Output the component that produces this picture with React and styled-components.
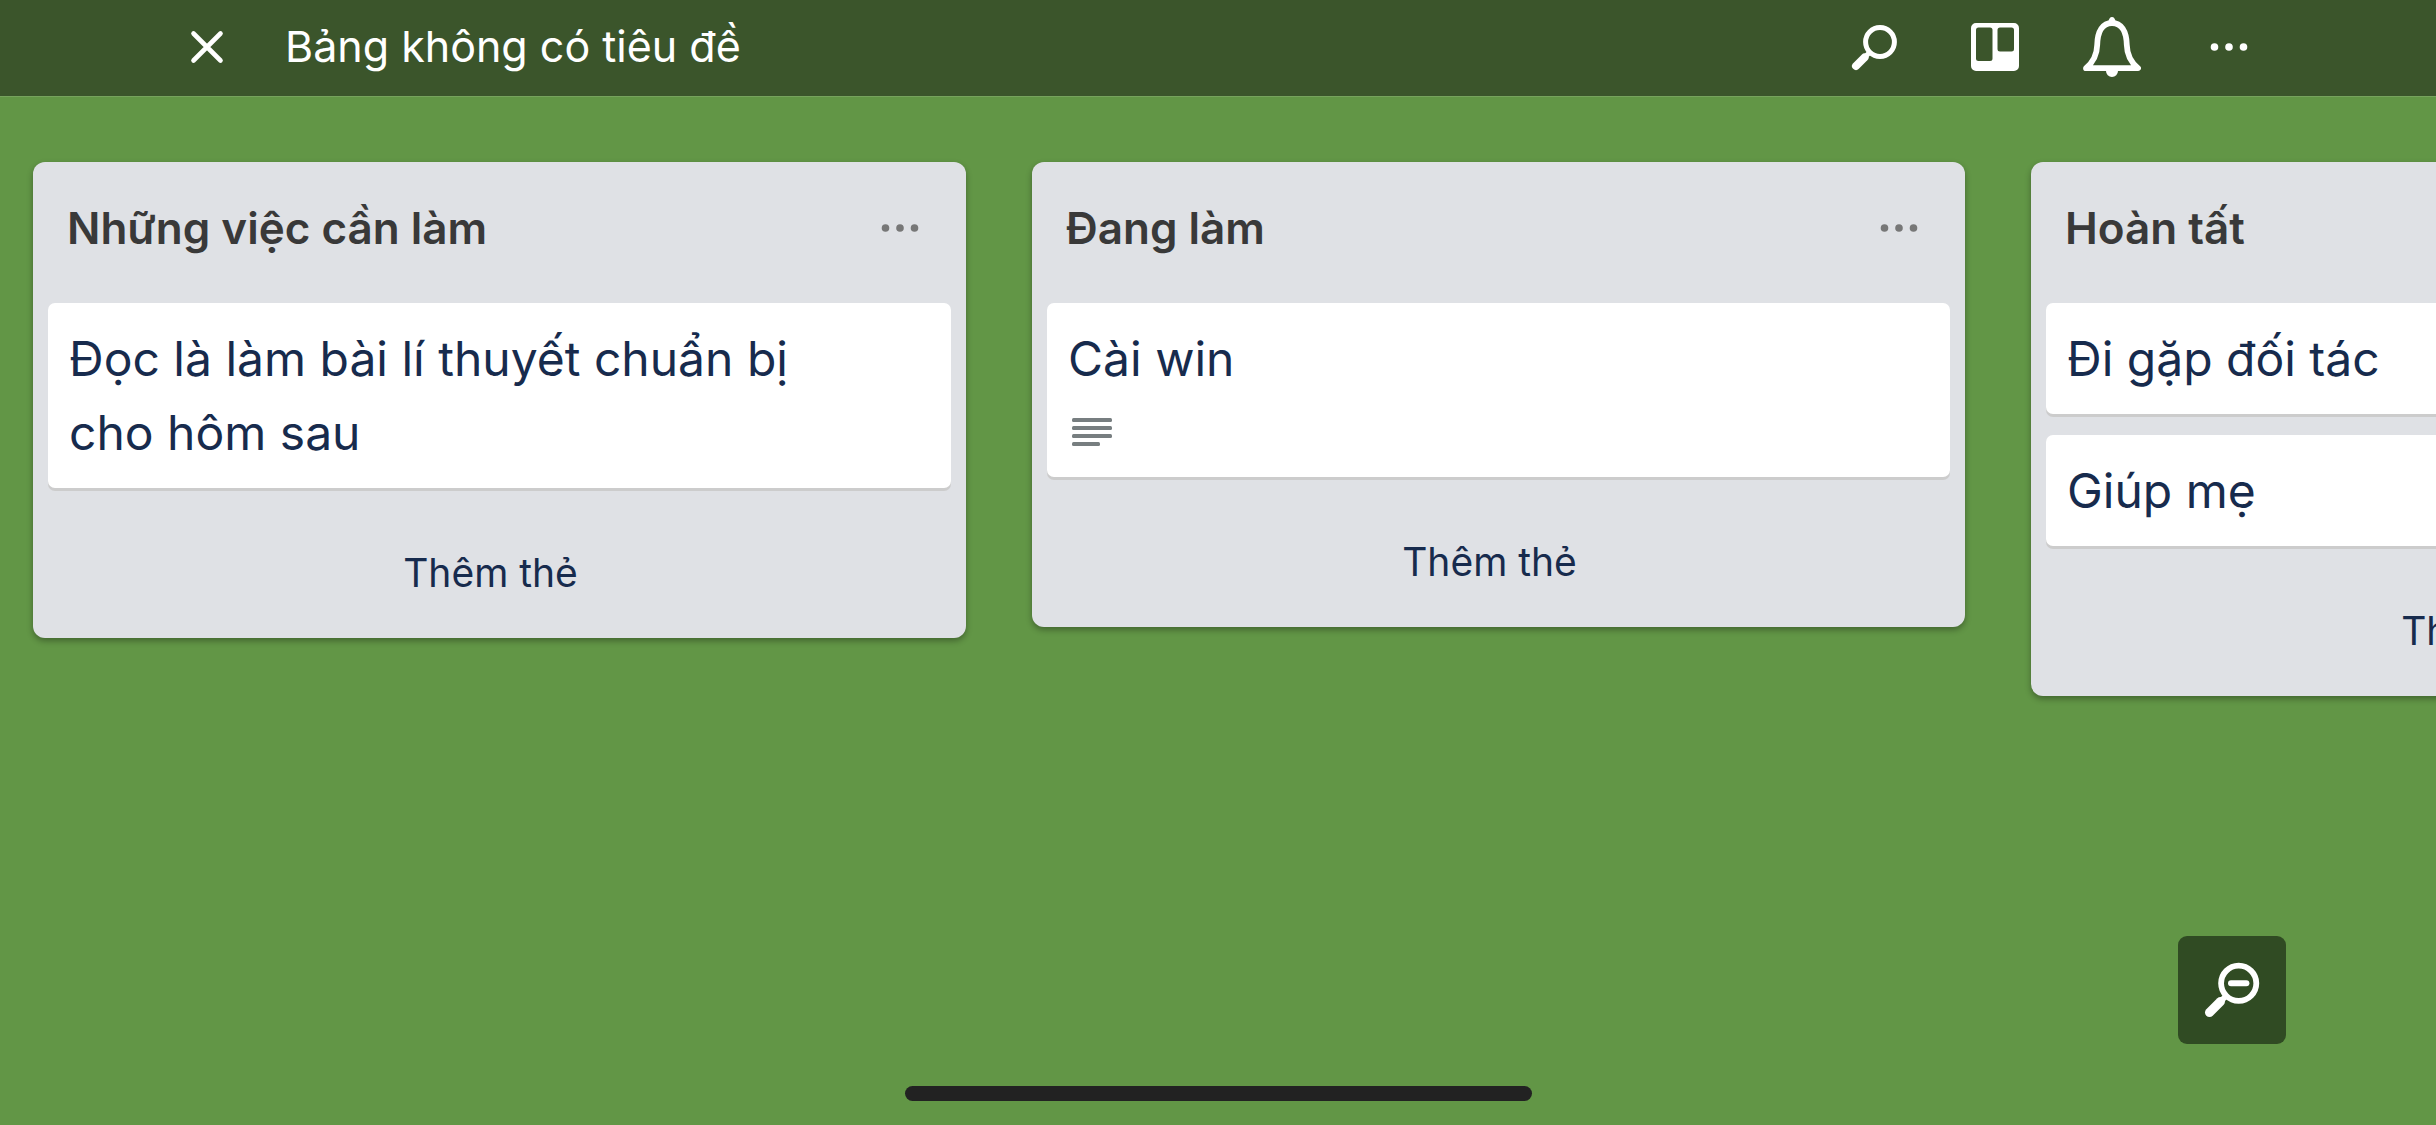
import React from "react";
import styled, { createGlobalStyle } from "styled-components";

const GlobalStyle = createGlobalStyle`
  *, *::before, *::after { box-sizing: border-box; }
  body {
    margin: 0;
    background: #629646;
    font-family: Inter, "Liberation Sans", sans-serif;
    color: #172b4d;
  }
  h1, h2, p, ul { margin: 0; padding: 0; }
  ul { list-style: none; }
  button { border: 0; padding: 0; background: none; font: inherit; color: inherit; cursor: pointer; }
`;

const Page = styled.div`
  display: flex;
  flex-direction: column;
  min-height: 100vh;
  overflow: hidden;
`;

const TopBar = styled.header`
  display: flex;
  align-items: center;
  height: 97px;
  padding: 0 149px 2px 171px;
  background: #3b552b;
  border-bottom: 1px solid #76a35d;
  color: #fff;
`;

const BoardTitle = styled.h1`
  flex: 1;
  margin-left: 42px;
  padding-bottom: 2px;
  font-size: 43px;
  line-height: 54px;
  font-weight: 400;
`;

const Actions = styled.nav`
  display: flex;
`;

const IconButton = styled.button`
  display: grid;
  place-items: center;
  width: ${(p) => p.$width}px;
  height: 72px;

  svg { display: block; }
`;

const Lists = styled.main`
  display: flex;
  flex: 1;
  align-items: flex-start;
  gap: 66px;
  padding: 65px 33px 33px;
  overflow-x: auto;
  scrollbar-width: none;
`;

const ListPanel = styled.section`
  flex: 0 0 933px;
  padding: 0 15px;
  border-radius: 12px;
  background: #dfe1e5;
  box-shadow: 0 3px 6px rgba(0, 0, 0, 0.32);
`;

const ListHeader = styled.header`
  display: flex;
  align-items: center;
  justify-content: space-between;
  height: 132px;
  margin-bottom: 9px;
  padding: 0 15px 0 19px;
  color: #777;
`;

const ListTitle = styled.h2`
  font-size: 44px;
  line-height: 54px;
  font-weight: 600;
  color: #393939;
`;

const Cards = styled.ul`
  display: flex;
  flex-direction: column;
  gap: 21px;
`;

const Card = styled.li`
  padding: 19px 72px 18px 21px;
  border-radius: 7px;
  background: #fff;
  box-shadow: 0 3px 0 #ccc;
`;

const CardTitle = styled.p`
  font-size: 48px;
  line-height: 74px;
`;

const Badges = styled.div`
  padding: 22px 4px 13px;

  svg { display: block; }
`;

const AddCard = styled.button`
  display: block;
  width: 100%;
  height: 150px;
  padding: 19px 18px 0 0;
  font-size: 39px;
  line-height: 48px;
  text-align: center;
`;

const ZoomButton = styled.button`
  position: absolute;
  right: 150px;
  bottom: 81px;
  width: 108px;
  height: 108px;
  border-radius: 9px;
  background: #304b23;

  svg { display: block; }
`;

const HomeIndicator = styled.div`
  width: 627px;
  height: 15px;
  margin: 0 auto 24px;
  border-radius: 8px;
  background: #222;
`;

const CloseIcon = () => (
  <svg width="36" height="36" viewBox="0 0 36 36" stroke="#fff" strokeWidth="4.6" strokeLinecap="round">
    <path d="M4.5 4.5l27 27M31.5 4.5l-27 27" />
  </svg>
);

const SearchIcon = () => (
  <svg width="54" height="54" viewBox="0 0 54 54" fill="none" stroke="#fff">
    <circle cx="29" cy="22" r="14.4" strokeWidth="5" />
    <path d="M18.5 32.5L14 37" strokeWidth="5" />
    <path d="M13.5 37.5L5 46" strokeWidth="8" strokeLinecap="round" />
  </svg>
);

const BoardIcon = () => (
  <svg width="48" height="48" viewBox="0 0 48 48" fill="#fff" fillRule="evenodd">
    <path d="M5 0h38a5 5 0 0 1 5 5v38a5 5 0 0 1-5 5H5a5 5 0 0 1-5-5V5a5 5 0 0 1 5-5zM7.500 4.500a2.500 2.500 0 0 0-2.500 2.500v28.500a2.500 2.500 0 0 0 2.500 2.500h11.500a2.500 2.500 0 0 0 2.500-2.500V7a2.500 2.500 0 0 0-2.500-2.500zM29 4.500A2.500 2.500 0 0 0 26.500 7v19a2.500 2.500 0 0 0 2.500 2.500h11.500a2.500 2.500 0 0 0 2.500-2.500V7a2.500 2.500 0 0 0-2.500-2.500z" />
  </svg>
);

const BellIcon = () => (
  <svg width="58" height="60" viewBox="0 0 58 60">
    <path
      d="M3 51.200C11 44.500 14 37 14.200 28C14.500 14 20 6 29 6C38 6 43.500 14 43.800 28C44 37 47 44.500 55 51.200Z"
      fill="none"
      stroke="#fff"
      strokeWidth="5.800"
      strokeLinejoin="round"
    />
    <path d="M25.500 5a3.500 5 0 0 1 7 0zM23 53h12v1a6 6 0 0 1-12 0z" fill="#fff" />
  </svg>
);

const DotsIcon = () => (
  <svg width="40" height="10" viewBox="0 0 40 10" fill="currentColor">
    <circle cx="5.500" cy="5" r="3.800" />
    <circle cx="20" cy="5" r="3.800" />
    <circle cx="34.500" cy="5" r="3.800" />
  </svg>
);

const DescriptionIcon = () => (
  <svg width="40" height="28" viewBox="0 0 40 28" fill="#777e80">
    <rect width="40" height="4" rx="1.500" />
    <rect y="8" width="40" height="4" rx="1.500" />
    <rect y="16" width="40" height="4" rx="1.500" />
    <rect y="24" width="28" height="4" rx="1.500" />
  </svg>
);

const ZoomOutIcon = () => (
  <svg width="108" height="108" viewBox="0 0 108 108" fill="none" stroke="#fff">
    <circle cx="60.700" cy="47.300" r="17.600" strokeWidth="5.800" />
    <path d="M53 47.300h15.400" strokeWidth="6" strokeLinecap="round" />
    <path d="M49 59L43 65" strokeWidth="5.600" />
    <path d="M42.500 65.500L31.500 76.500" strokeWidth="9" strokeLinecap="round" />
  </svg>
);

const lists = [
  { title: "Những việc cần làm", cards: [{ title: "Đọc là làm bài lí thuyết chuẩn bị cho hôm sau" }] },
  { title: "Đang làm", cards: [{ title: "Cài win", hasDescription: true }] },
  { title: "Hoàn tất", cards: [{ title: "Đi gặp đối tác" }, { title: "Giúp mẹ" }] },
];

export default function App() {
  return (
    <>
      <GlobalStyle />
      <Page>
        <TopBar>
          <IconButton $width={72} aria-label="Đóng"><CloseIcon /></IconButton>
          <BoardTitle>Bảng không có tiêu đề</BoardTitle>
          <Actions>
            <IconButton $width={117} aria-label="Tìm kiếm"><SearchIcon /></IconButton>
            <IconButton $width={117} aria-label="Bảng"><BoardIcon /></IconButton>
            <IconButton $width={117} aria-label="Thông báo"><BellIcon /></IconButton>
            <IconButton $width={117} aria-label="Thêm"><DotsIcon /></IconButton>
          </Actions>
        </TopBar>
        <Lists>
          {lists.map((list) => (
            <ListPanel key={list.title}>
              <ListHeader>
                <ListTitle>{list.title}</ListTitle>
                <IconButton $width={72} aria-label="Tùy chọn danh sách"><DotsIcon /></IconButton>
              </ListHeader>
              <Cards>
                {list.cards.map((card) => (
                  <Card key={card.title}>
                    <CardTitle>{card.title}</CardTitle>
                    {card.hasDescription && <Badges><DescriptionIcon /></Badges>}
                  </Card>
                ))}
              </Cards>
              <AddCard>Thêm thẻ</AddCard>
            </ListPanel>
          ))}
        </Lists>
        <HomeIndicator />
        <ZoomButton aria-label="Thu nhỏ"><ZoomOutIcon /></ZoomButton>
      </Page>
    </>
  );
}
